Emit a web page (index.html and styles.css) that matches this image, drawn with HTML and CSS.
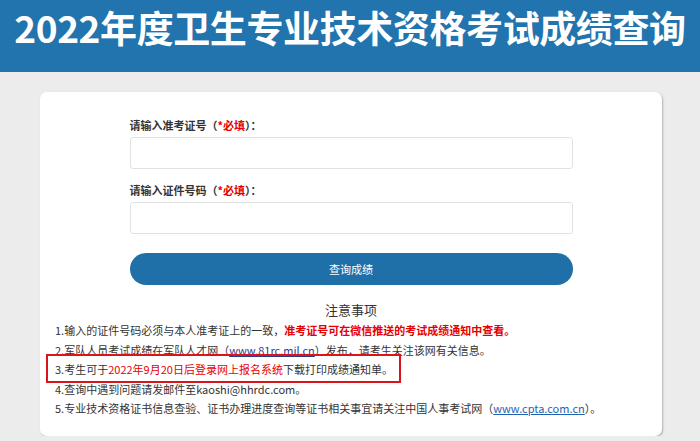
FILE: index.html
```html
<!DOCTYPE html>
<html lang="zh-CN">
<head>
  <meta charset="UTF-8">
  <title>2022年度卫生专业技术资格考试成绩查询</title>
  <link rel="stylesheet" href="styles.css">
</head>
<body>
  <header class="top">
    <h1>2022年度卫生专业技术资格考试成绩查询</h1>
  </header>

  <div class="card">
    <form class="query-form">
      <label class="field-label">请输入准考证号（<span class="req">*必填</span>）：</label>
      <input class="field" type="text">
      <label class="field-label">请输入证件号码（<span class="req">*必填</span>）：</label>
      <input class="field" type="text">
      <button class="submit" type="button">查询成绩</button>
    </form>

    <div class="notes">
      <h2>注意事项</h2>
      <p>1.输入的证件号码必须与本人准考证上的一致，<span class="red">准考证号可在微信推送的考试成绩通知中查看。</span></p>
      <p>2.军队人员考试成绩在军队人才网（<a href="#" class="link-dark">www.81rc.mil.cn</a>）发布，请考生关注该网有关信息。</p>
      <p><span class="boxed">3.考生可于<span class="red-plain">2022年9月20日后登录网上报名系统</span>下载打印成绩通知单。</span></p>
      <p>4.查询中遇到问题请发邮件至kaoshi@hhrdc.com。</p>
      <p>5.专业技术资格证书信息查验、证书办理进度查询等证书相关事宜请关注中国人事考试网（<a href="#" class="link">www.cpta.com.cn</a>）。</p>
    </div>
  </div>
</body>
</html>
```

FILE: styles.css
```css
body {
  margin: 0;
  padding: 0;
  background: #ececec;
  font-family: "Noto Sans CJK SC", "Noto Sans", sans-serif;
  color: #333;
}
.top {
  background: #2174ad;
  height: 72px;
}
.top h1 {
  margin: 0;
  color: #fff;
  font-size: 37px;
  line-height: 54px;
  font-weight: bold;
  letter-spacing: -0.4px;
  text-align: center;
  white-space: nowrap;
}
.card {
  width: 622px;
  margin: 20px 0 0 40px;
  box-sizing: border-box;
  background: #fff;
  border-radius: 7px;
  box-shadow: 1px 1px 2px rgba(0, 0, 0, 0.25);
  padding: 25px 15px 17px;
}
.query-form {
  width: 443px;
  margin: 0 auto;
  display: flex;
  flex-direction: column;
}
.field-label {
  font-size: 11px;
  line-height: 16px;
  font-weight: bold;
  color: #333;
}
.req {
  color: #e60000;
}
.field {
  height: 32px;
  box-sizing: border-box;
  border: 1px solid #e2e2e2;
  border-radius: 3px;
  margin: 4px 0 13px;
}
.submit {
  margin-top: 6px;
  height: 32px;
  border: none;
  border-radius: 16px;
  background: #1f70a9;
  color: #fff;
  font-family: inherit;
  font-size: 11px;
}
.notes h2 {
  margin: 16px 0 2px;
  font-size: 13px;
  line-height: 18px;
  font-weight: normal;
  text-align: center;
  color: #333;
}
.notes p {
  margin: 0;
  font-size: 11px;
  line-height: 19.5px;
  color: #333;
}
.red {
  color: #e60000;
  font-weight: bold;
}
.red-plain {
  color: #e60000;
}
.link-dark {
  color: #2c3a8c;
}
.link {
  color: #1f63b0;
}
.boxed {
  position: relative;
  display: inline-block;
}
.boxed::after {
  content: "";
  position: absolute;
  top: -6px;
  bottom: -3px;
  left: -9px;
  right: -8px;
  border: 2px solid #d9141b;
}
```
